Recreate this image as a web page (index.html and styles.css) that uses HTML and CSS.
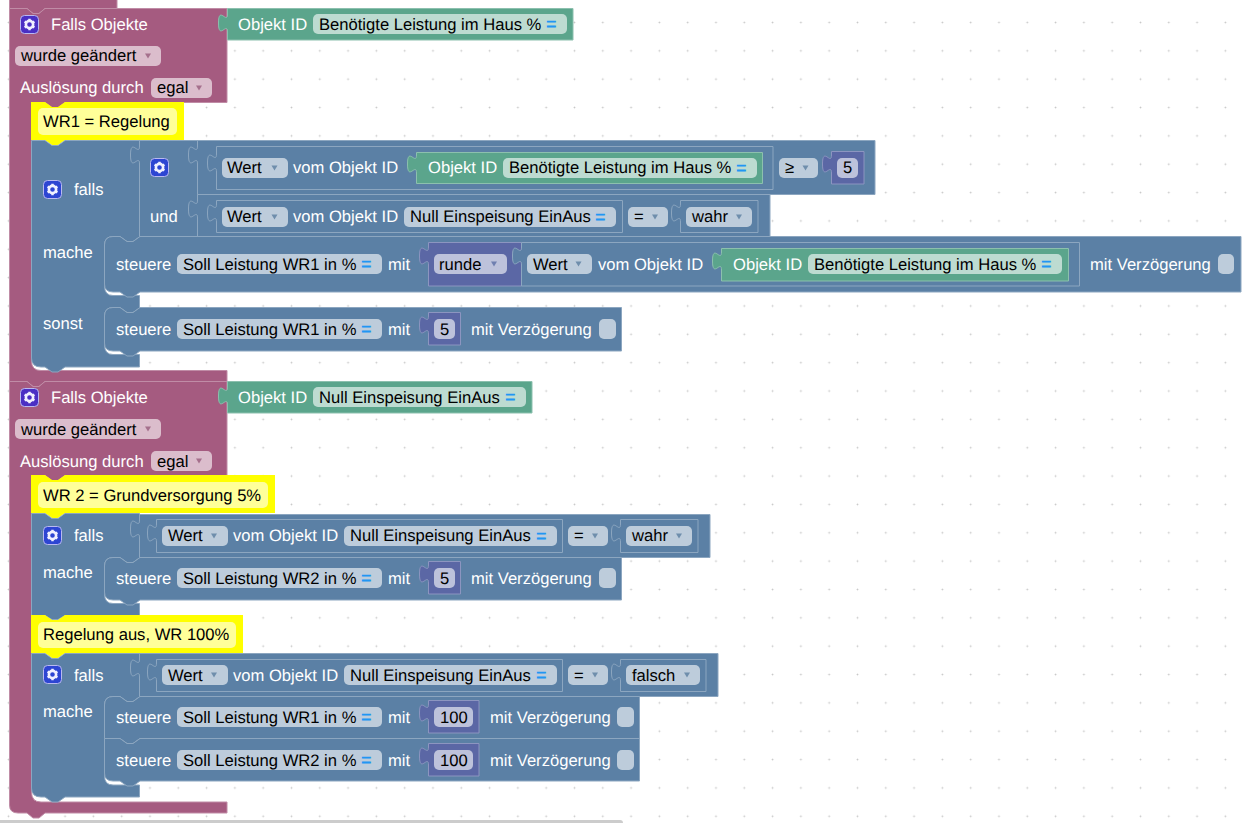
FILE: index.html
```html
<!DOCTYPE html>
<html lang="de">
<head>
  <meta charset="UTF-8" />
  <title>Blockly Skript</title>
  <link rel="stylesheet" href="styles.css">
</head>
<body>
<div class="workspace">
<svg class="canvas" width="1252" height="823" viewBox="0 0 1252 823" xmlns="http://www.w3.org/2000/svg">
  <defs>
    <pattern id="grid" x="7" y="21" width="28.3" height="28.35" patternUnits="userSpaceOnUse">
      <rect class="dot-arm" x="0" y="1" width="3" height="1"/>
      <rect class="dot-arm" x="1" y="0" width="1" height="3"/>
      <rect class="dot" x="1" y="1" width="1" height="1"/>
    </pattern>
    <path id="arrow" d="M-3,-2.5 H3 L0,2.5 Z"/>
    <g id="cog">
      <rect class="gear-box" x="0.5" y="0.5" width="18" height="18" rx="4"/>
      <path class="gear-teeth" d="M9.5,3.8 V15.2 M4.6,6.65 L14.4,12.35 M4.6,12.35 L14.4,6.65"/>
      <circle class="gear-ring" cx="9.5" cy="9.5" r="3.6"/>
    </g>
  </defs>
  <rect class="bg" width="1252" height="823"/>
  <rect width="1252" height="823" fill="url(#grid)"/>

  <!-- erster Trigger -->
  <path class="pink" d="M9.5,-5 H117 V8.5 H45 l-6,5 -6,0 -6,-5 H9.5 Z"/>
  <path class="pink" d="M9.5,8.5 H27 l6,5 6,0 6,-5 H227 V102.5 H65 l-7,5 -6,0 -7,-5 H31.5 V361 Q31.5,370.5 41,370.5 H227 V381.5 H45 l-6,5 -6,0 -6,-5 H9.5 Z"/>
  <use href="#cog" x="20" y="15" class="cog-pink"/>
  <text class="lbl" x="51" y="30">Falls Objekte</text>
  <rect class="f-pink" x="15" y="46" width="146" height="20" rx="5"/>
  <text class="val" x="21" y="61">wurde geändert</text>
  <use href="#arrow" x="148" y="56" class="ar-pink"/>
  <text class="lbl" x="20" y="93">Auslösung durch</text>
  <rect class="f-pink" x="151" y="78" width="61" height="20" rx="5"/>
  <text class="val" x="157" y="93">egal</text>
  <use href="#arrow" x="199" y="88" class="ar-pink"/>

  <path class="green" d="M227.5,8.5 H573 V40 H227.5 V32 c0,-11 -9,9 -9,-9 s9,2 9,-9 Z"/>
  <text class="lbl" x="238" y="30">Objekt ID</text>
  <rect class="f-green" x="313" y="14" width="254" height="20" rx="5"/>
  <text class="val" x="319" y="30">Benötigte Leistung im Haus %</text>
  <text class="eq" x="546" y="30">=</text>

  <path class="yellow" d="M31,102 H45 l7,5 6,0 7,-5 H184 V140 H65 l-7,5 -6,0 -7,-5 H31 Z"/>
  <rect class="f-yellow" x="38" y="108" width="139" height="27" rx="5"/>
  <text class="val" x="43" y="127">WR1 = Regelung</text>

  <path class="blue" d="M31.5,140.5 H45 l7,5 6,0 7,-5 H139.5 V236.5 H140 l-7,5 -6,0 -7,-5 H113 Q104.5,236.5 104.5,245 V286 Q104.5,295.5 113,295.5 H139.5 V307.5 H140 l-7,5 -6,0 -7,-5 H113 Q104.5,307.5 104.5,316 V345 Q104.5,354.5 113,354.5 H139.5 V367 H65 l-7,5 -6,0 -7,-5 H41 Q31.5,367 31.5,358 Z"/>
  <use href="#cog" x="43" y="180" class="cog-blue"/>
  <text class="lbl" x="74" y="195">falls</text>
  <text class="lbl" x="43" y="258">mache</text>
  <text class="lbl" x="43" y="329">sonst</text>

  <path class="blue" d="M139.5,140.5 H197.5 V236.5 H139.5 V164 c0,-11 -9,9 -9,-9 s9,2 9,-9 Z"/>
  <use href="#cog" x="150" y="158" class="cog-blue"/>
  <text class="lbl" x="150" y="222">und</text>

  <!-- Wert >= 5 -->
  <path class="blue" d="M197.5,140.5 H875 V194.5 H197.5 V164 c0,-11 -9,9 -9,-9 s9,2 9,-9 Z"/>
  <path class="blue" d="M216.5,146.5 H773 V189.5 H216.5 V172 c0,-11 -9,9 -9,-9 s9,2 9,-9 Z"/>
  <rect class="f-blue" x="222" y="158" width="66" height="20" rx="5"/>
  <text class="val" x="227" y="173">Wert</text>
  <use href="#arrow" x="274.5" y="168" class="ar-blue"/>
  <text class="lbl" x="293" y="173">vom Objekt ID</text>
  <path class="green" d="M416.5,152.5 H762.5 V183.5 H416.5 V173 c0,-11 -9,9 -9,-9 s9,2 9,-9 Z"/>
  <text class="lbl" x="428" y="173">Objekt ID</text>
  <rect class="f-green" x="503" y="158" width="254" height="20" rx="5"/>
  <text class="val" x="509" y="173">Benötigte Leistung im Haus %</text>
  <text class="eq" x="736" y="174">=</text>
  <rect class="f-blue" x="779" y="158" width="39" height="20" rx="5"/>
  <text class="val" x="785" y="173">≥</text>
  <use href="#arrow" x="805.5" y="168" class="ar-blue"/>
  <path class="purple" d="M831.5,151.5 H864 V184 H831.5 V173 c0,-11 -9,9 -9,-9 s9,2 9,-9 Z"/>
  <rect class="f-purple" x="837" y="158" width="21" height="20" rx="5"/>
  <text class="val" x="843" y="173">5</text>

  <!-- Wert = wahr -->
  <path class="blue" d="M197.5,194.5 H770 V237 H197.5 V218 c0,-11 -9,9 -9,-9 s9,2 9,-9 Z"/>
  <path class="blue" d="M216.5,200.5 H622.5 V232.5 H216.5 V222 c0,-11 -9,9 -9,-9 s9,2 9,-9 Z"/>
  <rect class="f-blue" x="222" y="207" width="66" height="20" rx="5"/>
  <text class="val" x="227" y="222">Wert</text>
  <use href="#arrow" x="274.5" y="217" class="ar-blue"/>
  <text class="lbl" x="293" y="222">vom Objekt ID</text>
  <rect class="f-blue" x="404" y="207" width="212" height="20" rx="5"/>
  <text class="val" x="410" y="222">Null Einspeisung EinAus</text>
  <text class="eq" x="595" y="223">=</text>
  <rect class="f-blue" x="628" y="207" width="40" height="20" rx="5"/>
  <text class="val" x="634" y="222">=</text>
  <use href="#arrow" x="655" y="217" class="ar-blue"/>
  <path class="blue" d="M680.5,200.5 H758 V232.5 H680.5 V222 c0,-11 -9,9 -9,-9 s9,2 9,-9 Z"/>
  <rect class="f-blue" x="686" y="207" width="66" height="20" rx="5"/>
  <text class="val" x="692" y="222">wahr</text>
  <use href="#arrow" x="739" y="217" class="ar-blue"/>

  <!-- steuere WR1 gerundet -->
  <path class="blue" d="M113,236.5 H120 l7,5 6,0 7,-5 H1241 V292 H140 l-7,5 -6,0 -7,-5 H113 Q104.5,292 104.5,284 V245 Q104.5,236.5 113,236.5 Z"/>
  <text class="lbl" x="116" y="270">steuere</text>
  <rect class="f-blue" x="177" y="254" width="205" height="20" rx="5"/>
  <text class="val" x="183" y="270">Soll Leistung WR1 in %</text>
  <text class="eq" x="361" y="270">=</text>
  <text class="lbl" x="388" y="270">mit</text>
  <path class="purple" d="M428.5,242.5 H521.5 V286 H428.5 V265 c0,-11 -9,9 -9,-9 s9,2 9,-9 Z"/>
  <rect class="f-purple" x="434" y="254" width="73" height="20" rx="5"/>
  <text class="val" x="439" y="270">runde</text>
  <use href="#arrow" x="494" y="264" class="ar-purple"/>
  <path class="blue" d="M521.5,242.5 H1079.5 V286 H521.5 V265 c0,-11 -9,9 -9,-9 s9,2 9,-9 Z"/>
  <rect class="f-blue" x="527" y="254" width="65" height="20" rx="5"/>
  <text class="val" x="533" y="270">Wert</text>
  <use href="#arrow" x="578.5" y="264" class="ar-blue"/>
  <text class="lbl" x="598" y="270">vom Objekt ID</text>
  <path class="green" d="M721.5,248.5 H1068.5 V281 H721.5 V270 c0,-11 -9,9 -9,-9 s9,2 9,-9 Z"/>
  <text class="lbl" x="733" y="270">Objekt ID</text>
  <rect class="f-green" x="808" y="254" width="254" height="20" rx="5"/>
  <text class="val" x="814" y="270">Benötigte Leistung im Haus %</text>
  <text class="eq" x="1041" y="270">=</text>
  <text class="lbl" x="1090" y="270">mit Verzögerung</text>
  <rect class="f-blue" x="1218" y="254" width="16" height="20" rx="5"/>

  <!-- sonst -->
  <path class="blue" d="M113,307.5 H120 l7,5 6,0 7,-5 H621.5 V351 H140 l-7,5 -6,0 -7,-5 H113 Q104.5,351 104.5,343 V316 Q104.5,307.5 113,307.5 Z"/>
  <text class="lbl" x="116" y="335">steuere</text>
  <rect class="f-blue" x="177" y="319" width="205" height="20" rx="5"/>
  <text class="val" x="183" y="335">Soll Leistung WR1 in %</text>
  <text class="eq" x="361" y="335">=</text>
  <text class="lbl" x="388" y="335">mit</text>
  <path class="purple" d="M428.5,312.5 H460.5 V345 H428.5 V334 c0,-11 -9,9 -9,-9 s9,2 9,-9 Z"/>
  <rect class="f-purple" x="434" y="319" width="21" height="20" rx="5"/>
  <text class="val" x="440" y="335">5</text>
  <text class="lbl" x="471" y="335">mit Verzögerung</text>
  <rect class="f-blue" x="599" y="319" width="17" height="20" rx="5"/>

  <!-- zweiter Trigger -->
  <path class="pink" d="M9.5,381.5 H27 l6,5 6,0 6,-5 H227 V475.5 H65 l-7,5 -6,0 -7,-5 H31.5 V792 Q31.5,802 41,802 H227 V813 H45 l-6,5 -6,0 -6,-5 H18 Q9.5,813 9.5,805 Z"/>
  <use href="#cog" x="20" y="388" class="cog-pink"/>
  <text class="lbl" x="51" y="403">Falls Objekte</text>
  <rect class="f-pink" x="15" y="419" width="146" height="20" rx="5"/>
  <text class="val" x="21" y="435">wurde geändert</text>
  <use href="#arrow" x="148" y="429" class="ar-pink"/>
  <text class="lbl" x="20" y="467">Auslösung durch</text>
  <rect class="f-pink" x="151" y="451" width="61" height="20" rx="5"/>
  <text class="val" x="157" y="467">egal</text>
  <use href="#arrow" x="199" y="461" class="ar-pink"/>

  <path class="green" d="M227.5,381.5 H532 V413 H227.5 V405 c0,-11 -9,9 -9,-9 s9,2 9,-9 Z"/>
  <text class="lbl" x="238" y="403">Objekt ID</text>
  <rect class="f-green" x="313" y="387" width="213" height="20" rx="5"/>
  <text class="val" x="319" y="403">Null Einspeisung EinAus</text>
  <text class="eq" x="505" y="403">=</text>

  <path class="yellow" d="M31,475 H45 l7,5 6,0 7,-5 H275 V513 H65 l-7,5 -6,0 -7,-5 H31 Z"/>
  <rect class="f-yellow" x="38" y="482" width="230" height="26" rx="5"/>
  <text class="val" x="43" y="501">WR 2 = Grundversorgung 5%</text>

  <path class="blue" d="M31.5,513.5 H45 l7,5 6,0 7,-5 H139.5 V557.5 H140 l-7,5 -6,0 -7,-5 H113 Q104.5,557.5 104.5,566 V594 Q104.5,603.5 113,603.5 H139.5 V615.5 H65 l-7,4 -6,0 -7,-4 H31.5 Z"/>
  <use href="#cog" x="43" y="526" class="cog-blue"/>
  <text class="lbl" x="74" y="541">falls</text>
  <text class="lbl" x="43" y="578">mache</text>

  <path class="blue" d="M139.5,514.5 H710 V557.5 H139.5 V538 c0,-11 -9,9 -9,-9 s9,2 9,-9 Z"/>
  <path class="blue" d="M156.5,519.5 H562.5 V552.5 H156.5 V542 c0,-11 -9,9 -9,-9 s9,2 9,-9 Z"/>
  <rect class="f-blue" x="162" y="526" width="66" height="20" rx="5"/>
  <text class="val" x="168" y="541">Wert</text>
  <use href="#arrow" x="214" y="536" class="ar-blue"/>
  <text class="lbl" x="233" y="541">vom Objekt ID</text>
  <rect class="f-blue" x="344" y="526" width="213" height="20" rx="5"/>
  <text class="val" x="350" y="541">Null Einspeisung EinAus</text>
  <text class="eq" x="536" y="542">=</text>
  <rect class="f-blue" x="568" y="526" width="40" height="20" rx="5"/>
  <text class="val" x="574" y="541">=</text>
  <use href="#arrow" x="595" y="536" class="ar-blue"/>
  <path class="blue" d="M620.5,519.5 H698 V552.5 H620.5 V542 c0,-11 -9,9 -9,-9 s9,2 9,-9 Z"/>
  <rect class="f-blue" x="626" y="526" width="66" height="20" rx="5"/>
  <text class="val" x="632" y="541">wahr</text>
  <use href="#arrow" x="679" y="536" class="ar-blue"/>

  <path class="blue" d="M113,557.5 H120 l7,5 6,0 7,-5 H621.5 V600 H140 l-7,5 -6,0 -7,-5 H113 Q104.5,600 104.5,592 V566 Q104.5,557.5 113,557.5 Z"/>
  <text class="lbl" x="116" y="584">steuere</text>
  <rect class="f-blue" x="177" y="568" width="205" height="20" rx="5"/>
  <text class="val" x="183" y="584">Soll Leistung WR2 in %</text>
  <text class="eq" x="361" y="584">=</text>
  <text class="lbl" x="388" y="584">mit</text>
  <path class="purple" d="M428.5,561.5 H460.5 V594 H428.5 V583 c0,-11 -9,9 -9,-9 s9,2 9,-9 Z"/>
  <rect class="f-purple" x="434" y="568" width="21" height="20" rx="5"/>
  <text class="val" x="440" y="584">5</text>
  <text class="lbl" x="471" y="584">mit Verzögerung</text>
  <rect class="f-blue" x="599" y="568" width="17" height="20" rx="5"/>

  <path class="yellow" d="M31,615 H45 l7,5 6,0 7,-5 H243 V653 H65 l-7,5 -6,0 -7,-5 H31 Z"/>
  <rect class="f-yellow" x="38" y="622" width="198" height="26" rx="5"/>
  <text class="val" x="43" y="640">Regelung aus, WR 100%</text>

  <path class="blue" d="M31.5,653.5 H45 l7,5 6,0 7,-5 H139.5 V696.5 H140 l-7,5 -6,0 -7,-5 H113 Q104.5,696.5 104.5,705 V776 Q104.5,785 113,785 H139.5 V797 H65 l-7,5 -6,0 -7,-5 H41 Q31.5,797 31.5,788 Z"/>
  <use href="#cog" x="43" y="665" class="cog-blue"/>
  <text class="lbl" x="74" y="681">falls</text>
  <text class="lbl" x="43" y="717">mache</text>

  <path class="blue" d="M139.5,653.5 H718 V696.5 H139.5 V677 c0,-11 -9,9 -9,-9 s9,2 9,-9 Z"/>
  <path class="blue" d="M156.5,659.5 H562.5 V691.5 H156.5 V681 c0,-11 -9,9 -9,-9 s9,2 9,-9 Z"/>
  <rect class="f-blue" x="162" y="665" width="66" height="20" rx="5"/>
  <text class="val" x="168" y="681">Wert</text>
  <use href="#arrow" x="214" y="675" class="ar-blue"/>
  <text class="lbl" x="233" y="681">vom Objekt ID</text>
  <rect class="f-blue" x="344" y="665" width="213" height="20" rx="5"/>
  <text class="val" x="350" y="681">Null Einspeisung EinAus</text>
  <text class="eq" x="536" y="681">=</text>
  <rect class="f-blue" x="568" y="665" width="40" height="20" rx="5"/>
  <text class="val" x="574" y="681">=</text>
  <use href="#arrow" x="595" y="675" class="ar-blue"/>
  <path class="blue" d="M620.5,659.5 H706 V691.5 H620.5 V681 c0,-11 -9,9 -9,-9 s9,2 9,-9 Z"/>
  <rect class="f-blue" x="626" y="665" width="74" height="20" rx="5"/>
  <text class="val" x="632" y="681">falsch</text>
  <use href="#arrow" x="687" y="675" class="ar-blue"/>

  <path class="blue" d="M113,696.5 H120 l7,5 6,0 7,-5 H639.5 V738.5 H140 l-7,5 -6,0 -7,-5 H104.5 V705 Q104.5,696.5 113,696.5 Z"/>
  <text class="lbl" x="116" y="723">steuere</text>
  <rect class="f-blue" x="177" y="707" width="205" height="20" rx="5"/>
  <text class="val" x="183" y="723">Soll Leistung WR1 in %</text>
  <text class="eq" x="361" y="723">=</text>
  <text class="lbl" x="388" y="723">mit</text>
  <path class="purple" d="M428.5,700.5 H479 V733 H428.5 V722 c0,-11 -9,9 -9,-9 s9,2 9,-9 Z"/>
  <rect class="f-purple" x="434" y="707" width="39" height="20" rx="5"/>
  <text class="val" x="440" y="723">100</text>
  <text class="lbl" x="490" y="723">mit Verzögerung</text>
  <rect class="f-blue" x="617" y="707" width="17" height="20" rx="5"/>

  <path class="blue" d="M104.5,738.5 H120 l7,5 6,0 7,-5 H639.5 V781 H140 l-7,5 -6,0 -7,-5 H113 Q104.5,781 104.5,773 Z"/>
  <text class="lbl" x="116" y="766">steuere</text>
  <rect class="f-blue" x="177" y="750" width="205" height="20" rx="5"/>
  <text class="val" x="183" y="766">Soll Leistung WR2 in %</text>
  <text class="eq" x="361" y="766">=</text>
  <text class="lbl" x="388" y="766">mit</text>
  <path class="purple" d="M428.5,743.5 H479 V776 H428.5 V765 c0,-11 -9,9 -9,-9 s9,2 9,-9 Z"/>
  <rect class="f-purple" x="434" y="750" width="39" height="20" rx="5"/>
  <text class="val" x="440" y="766">100</text>
  <text class="lbl" x="490" y="766">mit Verzögerung</text>
  <rect class="f-blue" x="617" y="750" width="17" height="20" rx="5"/>
</svg>
<div class="hscroll"></div>
</div>
</body>
</html>
```

FILE: styles.css
```css
html, body {
  margin: 0;
  padding: 0;
  overflow: hidden;
}
.workspace {
  position: relative;
  width: 1252px;
  height: 823px;
  overflow: hidden;
  background-color: #fff;
}
.canvas {
  display: block;
  font-family: "Liberation Sans", Arial, sans-serif;
  font-size: 16.6px;
  text-rendering: geometricPrecision;
}
.bg { fill: #fff; }
.dot { fill: #c4c4c4; }
.dot-arm { fill: #ececec; }

/* scrollbar along the bottom edge */
.hscroll {
  position: absolute;
  left: 0;
  bottom: 0;
  width: 623px;
  height: 3px;
  background-color: #ccc;
  border-top-right-radius: 3px;
}

/* block colours */
.pink { fill: #a55b80; stroke: #c08ca6; stroke-width: 1; }
.blue { fill: #5b80a5; stroke: #8ca6c0; stroke-width: 1; }
.green { fill: #5ba58c; stroke: #8cc0ae; stroke-width: 1; }
.purple { fill: #5b67a5; stroke: #8c95c0; stroke-width: 1; }
.yellow { fill: #ff0; }

/* fields */
.f-pink { fill: #dbbdcc; }
.f-blue { fill: #bdccdb; }
.f-green { fill: #bddbd1; }
.f-purple { fill: #bdc2db; }
.f-yellow { fill: #ffff99; }

.ar-pink { fill: #a5708c; }
.ar-blue { fill: #6f8eac; }
.ar-purple { fill: #6f7fb0; }

/* text */
.lbl { fill: #fff; }
.val { fill: #000; }
.eq { fill: #2196f3; font-weight: bold; font-size: 18px; }

/* settings icon: box colour comes from the <use> */
.cog-blue { fill: #2d45d2; }
.cog-pink { fill: #4a2fc4; }
.gear-box { fill: inherit; stroke: #b9b9f0; stroke-width: 1; }
.gear-teeth { stroke: #f0f0ff; stroke-width: 2.4; fill: none; }
.gear-ring { stroke: #f0f0ff; stroke-width: 2.6; fill: inherit; }
```
